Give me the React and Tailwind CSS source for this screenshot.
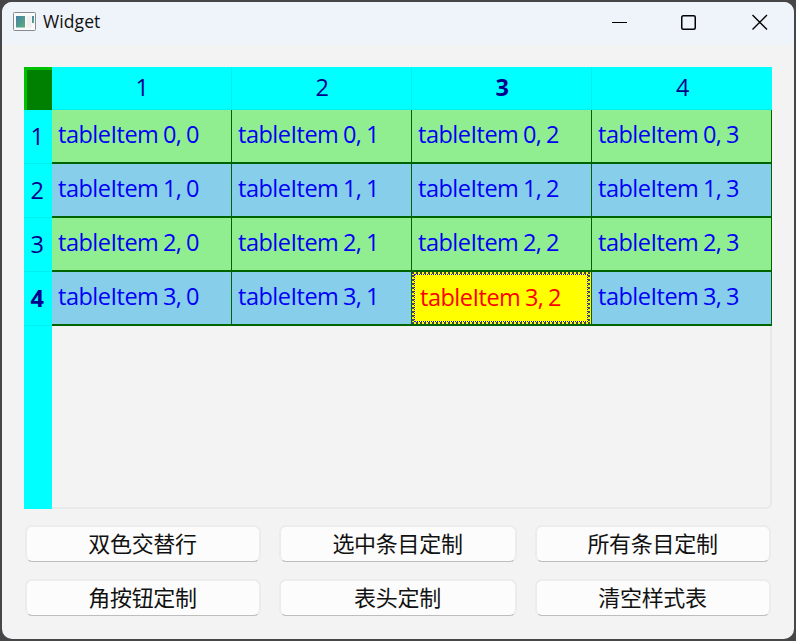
const columns = ['1', '2', '3', '4'];
const rows = [0, 1, 2, 3];
const buttons = ['双色交替行', '选中条目定制', '所有条目定制', '角按钮定制', '表头定制', '清空样式表'];

function AppIcon() {
  return (
    <svg width="23" height="19" viewBox="0 0 23 19" className="shrink-0">
      <defs>
        <linearGradient id="pane" x1="0" y1="0" x2="1" y2="1">
          <stop offset="0" stopColor="#477fac" />
          <stop offset="1" stopColor="#59b077" />
        </linearGradient>
      </defs>
      <rect x="0.5" y="0.5" width="22" height="18" rx="1" fill="#fafafa" stroke="#858b91" />
      <rect x="3" y="4" width="9" height="11.5" fill="url(#pane)" />
      <rect x="13.5" y="4" width="5" height="11.5" fill="#f0f0f0" />
      <rect x="19" y="4" width="2" height="7" fill="url(#pane)" />
    </svg>
  );
}

function TitleBar() {
  return (
    <header className="flex h-[43px] shrink-0 items-start bg-[#eff3fa] pl-[11px]">
      <div className="flex h-[39px] items-center gap-[7px]">
        <AppIcon />
        <span className="text-[17.5px] leading-[39px] tracking-[0.1px] text-[#111]">Widget</span>
      </div>
      <div className="ml-auto flex h-10 items-center pr-[26px] text-black">
        <svg width="15" height="16" viewBox="0 0 15 16" stroke="currentColor" strokeWidth="1.2">
          <path d="M0 8.5H15" />
        </svg>
        <svg width="16" height="16" viewBox="0 0 16 16" fill="none" stroke="currentColor" strokeWidth="1.5" className="ml-[54px]">
          <rect x="0.75" y="1.75" width="13.5" height="13.5" rx="1.5" />
        </svg>
        <svg width="16" height="16" viewBox="0 0 16 16" stroke="currentColor" strokeWidth="1.4" className="ml-[55px]">
          <path d="M0.5 1L15 15.5M15 1L0.5 15.5" />
        </svg>
      </div>
    </header>
  );
}

function Cell({ row, column }) {
  const selected = row === 3 && column === 2;
  const label = `tableItem ${row}, ${column}`;
  if (selected) {
    return (
      <div className="h-[54px] w-[180px] border-r border-b-2 border-[#006400] bg-[#ffff00] pr-px">
        <div className="h-full border-2 border-dotted border-[#44445a]">
          <div className="h-full border border-dotted border-[#2222ee] pl-[5px] leading-[44px] text-[#ff0000]">
            {label}
          </div>
        </div>
      </div>
    );
  }
  return (
    <div
      className={`h-[54px] w-[180px] border-r border-b-2 border-[#006400] pl-1.5 leading-[49px] text-[#0000f5] ${
        row % 2 ? 'bg-[#87ceeb]' : 'bg-[#90ee90]'
      }`}
    >
      {label}
    </div>
  );
}

function Table() {
  return (
    <section className="flex h-[442px] w-[748px] text-[23.5px] tracking-[-0.5px] whitespace-nowrap [word-spacing:-1px]">
      <div className="flex w-7 shrink-0 flex-col bg-[#00ffff] text-center text-[#00008b]">
        <div className="h-[43px] border-t-[3px] border-l-[3px] border-[#00c000] bg-[#008000]" />
        {rows.map((row) => (
          <div
            key={row}
            className={`h-[54px] border-b border-[#00efef] pr-0.5 leading-[53px] ${row === 3 ? 'font-bold' : ''}`}
          >
            {row + 1}
          </div>
        ))}
      </div>
      <div className="flex w-[720px] flex-col">
        <div className="flex h-[43px] bg-[#00ffff] text-center text-[#00008b]">
          {columns.map((column) => (
            <div
              key={column}
              className={`w-[180px] border-r border-b border-[#00efef] pl-px leading-[41px] last:border-r-0 ${column === '3' ? 'font-bold' : ''}`}
            >
              {column}
            </div>
          ))}
        </div>
        {rows.map((row) => (
          <div key={row} className="flex">
            {columns.map((_, column) => (
              <Cell key={column} row={row} column={column} />
            ))}
          </div>
        ))}
        <div className="flex-1 rounded-br-[6px] border-r-2 border-b-2 border-[#e9e9e9]" />
      </div>
    </section>
  );
}

export default function App() {
  return (
    <div className="h-[641px] w-[796px] overflow-hidden bg-[#464648] p-0.5 font-['Open_Sans','Noto_Sans_CJK_SC',sans-serif]">
      <main className="flex h-[637px] w-[792px] flex-col overflow-hidden rounded-[10px] bg-[#f3f3f3]">
        <TitleBar />
        <div className="px-[22px] pt-[22px]">
          <Table />
          <div className="grid grid-cols-[236px_238px_236px] gap-x-[18px] gap-y-[17px] pt-4 pl-px">
            {buttons.map((label) => (
              <button
                key={label}
                className="h-[37px] rounded-[7px] border-2 border-b border-[#ececec] border-b-[#bdbdbd] bg-[#fcfcfc] pr-px pb-[3px] font-['Noto_Sans_CJK_SC',sans-serif] text-[22px] leading-[31px] tracking-[-0.3px] text-[#111]"
              >
                {label}
              </button>
            ))}
          </div>
        </div>
      </main>
    </div>
  );
}
